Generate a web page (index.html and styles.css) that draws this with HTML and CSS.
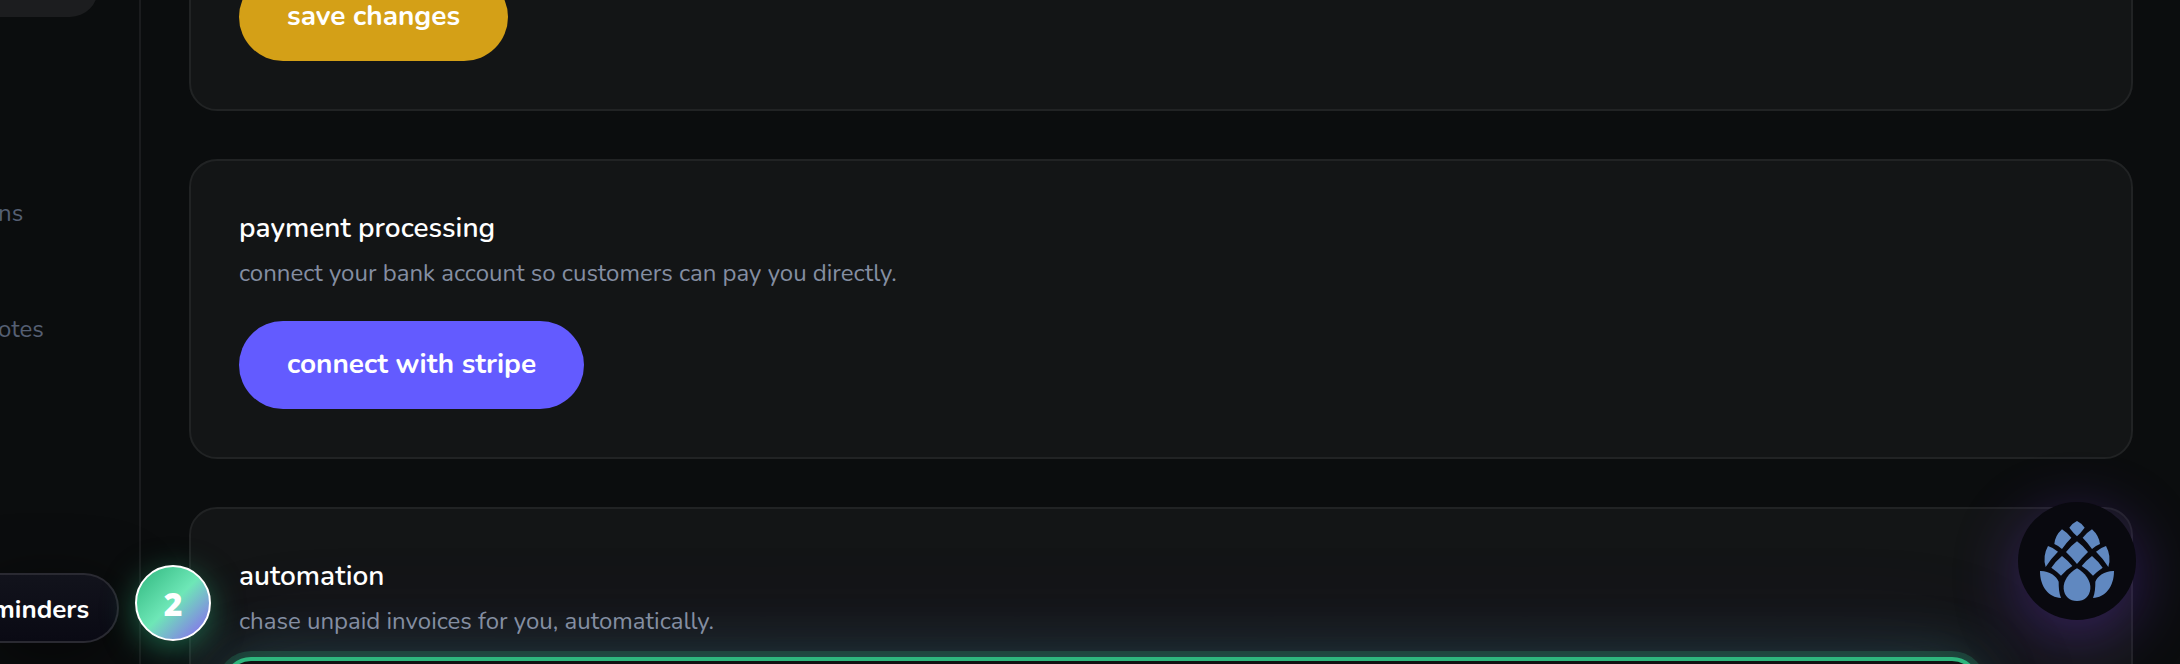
FILE: index.html
```html
<!DOCTYPE html>
<html lang="en">
<head>
<meta charset="utf-8">
<title>settings</title>
<link rel="stylesheet" href="styles.css">
</head>
<body>
<div class="shell">
  <nav class="sidebar">
    <a class="nav-item nav-item-active" href="#" aria-label="settings"></a>
    <a class="nav-item nav-item-push" href="#">ns</a>
    <a class="nav-item" href="#">otes</a>
  </nav>
  <main class="content">
    <section class="card">
      <button class="btn btn-gold" type="button">save changes</button>
    </section>
    <section class="card">
      <h2 class="title">payment processing</h2>
      <p class="desc">connect your bank account so customers can pay you directly.</p>
      <button class="btn btn-stripe" type="button">connect with stripe</button>
    </section>
    <section class="card">
      <h2 class="title">automation</h2>
      <p class="desc">chase unpaid invoices for you, automatically.</p>
      <div class="spotlight"></div>
    </section>
  </main>
</div>
<div class="tour">
  <div class="tour-label">minders</div>
  <div class="tour-step">2</div>
</div>
<button class="helper" type="button" aria-label="assistant">
  <svg class="helper-icon" viewBox="0 0 222 240" aria-hidden="true">
    <path d="M111 0Q127 8 134 20Q122 36 111 46Q100 36 88 20Q95 8 111 0Z"/>
    <path d="M66 25Q83 36 94 50Q78 66 66 84Q54 73 43 69Q45 44 66 25Z"/>
    <path d="M156 25Q139 36 128 50Q144 66 156 84Q168 73 180 69Q177 44 156 25Z"/>
    <path d="M111 61Q130 75 144 93Q128 108 111 129Q94 108 78 93Q92 75 111 61Z"/>
    <path d="M24 75Q40 80 54 92Q34 111 17 138Q7 106 24 75Z"/>
    <path d="M198 75Q182 80 168 92Q188 111 205 138Q215 106 198 75Z"/>
    <path d="M66 105Q83 118 97 135Q80 145 63 164Q50 151 34 140Q47 121 66 105Z"/>
    <path d="M156 105Q139 118 125 135Q142 145 159 164Q172 151 188 140Q175 121 156 105Z"/>
    <path d="M0 150C27 149 50 165 56 182C56 200 57 215 63 231C27 229 0 198 0 150Z"/>
    <path d="M222 150C195 149 172 165 166 182C166 200 165 215 159 231C195 229 222 198 222 150Z"/>
    <path d="M111 142C135 155 153 180 151 203C149 226 133 240 111 240C89 240 73 226 71 203C69 180 87 155 111 142Z"/>
  </svg>
</button>
</body>
</html>
```
FILE: styles.css
```css
* {
  box-sizing: border-box;
}

body {
  margin: 0;
  height: 100vh;
  overflow: hidden;
  background: #0b0d0e;
  color: #ffffff;
  font-family: Nunito, "Open Sans", "Noto Sans", sans-serif;
}

.shell {
  display: flex;
  height: 100vh;
  overflow: hidden;
}

.sidebar {
  display: flex;
  flex-direction: column;
  gap: 44px;
  flex: none;
  width: 141px;
  height: 800px;
  margin-top: -55px;
  padding-right: 41px;
  border-right: 2px solid #1b1c1e;
}

.nav-item {
  display: flex;
  align-items: center;
  height: 72px;
  margin-left: -2px;
  border-radius: 0 28px 28px 0;
  color: #555f73;
  font-size: 24px;
  text-decoration: none;
}

.nav-item-active {
  background: #1c1d1f;
}

.nav-item-push {
  margin-top: 116px;
}

.content {
  display: flex;
  flex-direction: column;
  flex: 1;
  gap: 48px;
  margin-top: -77px;
  padding: 0 47px 0 48px;
}

.card {
  flex: none;
  padding: 48px;
  border: 2px solid #212324;
  border-radius: 28px;
  background: #131516;
}

.title {
  margin: 0 0 8px;
  font-size: 28px;
  font-weight: 600;
  line-height: 38px;
}

.desc {
  margin: 0 0 30px;
  color: #848ea2;
  font-size: 24px;
  line-height: 36px;
}

.btn {
  display: block;
  height: 88px;
  padding: 0 48px 2px;
  border: 0;
  border-radius: 44px;
  color: #ffffff;
  font-family: inherit;
  font-size: 28px;
  font-weight: 700;
}

.btn-gold {
  background: #d4a017;
}

.btn-stripe {
  background: #635bff;
}

.spotlight {
  height: 160px;
  margin: -12px 103px 0 -16px;
  border: 4px solid #2eb67d;
  border-radius: 28px;
  background: #111112;
  box-shadow: 0 0 0 6px rgba(46, 182, 125, 0.22), 0 0 60px rgba(52, 160, 150, 0.32), 0 0 120px rgba(110, 60, 180, 0.14);
}

.tour {
  position: absolute;
  left: -8px;
  bottom: 21px;
  display: flex;
  align-items: flex-start;
  gap: 16px;
}

.tour-label {
  display: flex;
  align-items: center;
  height: 70px;
  margin-top: 8px;
  padding: 2px 28px 0 0;
  border: 2px solid #2a2a32;
  border-left: 0;
  border-radius: 0 35px 35px 0;
  background: linear-gradient(#12131c, #0a0a14);
  box-shadow: 0 16px 64px rgba(0, 0, 0, 0.6);
  font-size: 26px;
  font-weight: 700;
}

.tour-step {
  display: flex;
  align-items: center;
  justify-content: center;
  width: 76px;
  height: 76px;
  border: 2px solid #ffffff;
  border-radius: 50%;
  background: linear-gradient(135deg, #2eb67d, #6ee7b7 50%, #8b5cf6);
  box-shadow: 0 8px 32px rgba(46, 182, 125, 0.5);
  font-family: "Open Sans", "Noto Sans", sans-serif;
  font-size: 32px;
  font-weight: 800;
}

.helper {
  position: absolute;
  right: 44px;
  bottom: 44px;
  display: flex;
  align-items: center;
  justify-content: center;
  width: 118px;
  height: 118px;
  padding: 0;
  border: 0;
  border-radius: 50%;
  background: #09090f;
  box-shadow: 0 16px 64px rgba(124, 58, 237, 0.35);
}

.helper-icon {
  width: 74px;
  height: 80px;
  fill: #6088c0;
}
```
